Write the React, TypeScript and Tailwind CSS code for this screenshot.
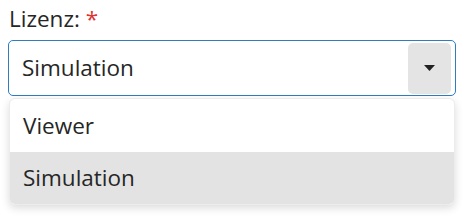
export default function App() {
  return (
    <div
      className="h-[216px] w-[470px] bg-white px-2 pt-[4px] text-[#262626]"
      style={{ fontFamily: '"Open Sans", "Noto Sans", sans-serif' }}
    >
      <label className="block pl-px text-[22.5px] leading-[30px]">
        Lizenz: <span className="text-[#e03131]">*</span>
      </label>

      <div className="mt-[6px] flex h-[56px] w-[448px] items-center rounded-[5px] border border-[#2f7cc1] pl-[13px] pr-[4px]">
        <span className="flex-1 text-[22.5px] leading-[30px]">Simulation</span>
        <button
          type="button"
          className="flex h-[51px] w-[43px] items-center justify-center rounded-[5px] bg-[#e4e4e4]"
          aria-label="Öffnen"
        >
          <svg width="11" height="6" viewBox="0 0 11 6">
            <path d="M0 0 H11 L5.5 6 Z" fill="#222" />
          </svg>
        </button>
      </div>

      <ul className="ml-px mt-[2px] w-[446px] overflow-hidden rounded-[6px] border border-[#ececec] bg-white shadow-[0_3px_8px_rgba(0,0,0,0.14)]">
        <li className="flex h-[53px] items-center pl-[13px] text-[22.5px]">Viewer</li>
        <li className="flex h-[52px] items-center bg-[#e3e3e3] pl-[13px] text-[22.5px]">
          Simulation
        </li>
      </ul>
    </div>
  );
}
